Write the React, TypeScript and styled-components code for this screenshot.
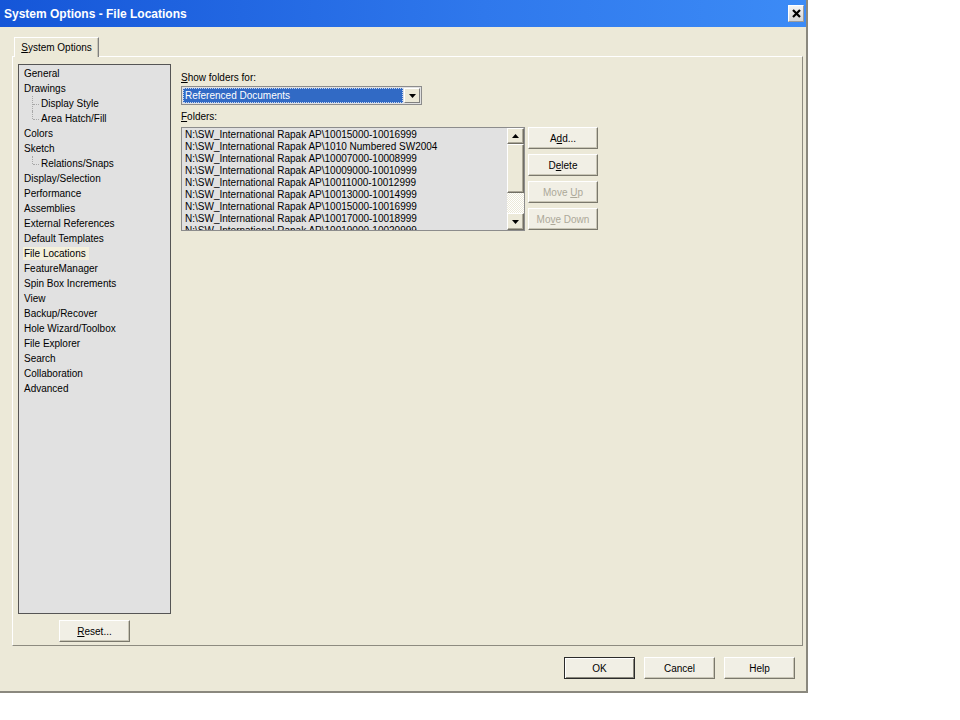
import React from 'react';
import styled, { createGlobalStyle } from 'styled-components';

const GlobalStyle = createGlobalStyle`
  html, body {
    margin: 0;
    padding: 0;
    background: #fff;
  }
  body {
    font-family: 'Liberation Sans', Arial, sans-serif;
    font-size: 10px;
    color: #000;
  }
`;

const Window = styled.div`
  width: 806px;
  height: 691px;
  background: #ece9d8;
  border-right: 2px solid #8a887e;
  border-bottom: 2px solid #8a887e;
  display: flex;
  flex-direction: column;
`;

const TitleBar = styled.div`
  height: 27px;
  flex: none;
  display: flex;
  align-items: center;
  justify-content: space-between;
  padding: 0 2px 0 4px;
  background: linear-gradient(to right, #1556d8, #2f78ec 60%, #3c8bf6);
`;

const Title = styled.div`
  color: #fff;
  font-weight: bold;
  font-size: 12px;
`;

const CloseButton = styled.div`
  width: 16px;
  height: 17px;
  box-sizing: border-box;
  display: flex;
  align-items: center;
  justify-content: center;
  background: linear-gradient(#f4f4f4, #d4d4d4);
  border: 1px solid #fff;
  border-right-color: #9a9a9a;
  border-bottom-color: #9a9a9a;
`;

const Body = styled.div`
  flex: 1;
  display: flex;
  flex-direction: column;
  padding: 10px 3px 0 12px;
`;

const TabStrip = styled.div`
  display: flex;
  padding-left: 2px;
`;

const Tab = styled.div`
  position: relative;
  z-index: 1;
  width: 85px;
  height: 20px;
  box-sizing: border-box;
  margin-bottom: -1px;
  display: flex;
  align-items: center;
  justify-content: center;
  background: #ece9d8;
  border-top: 1px solid #fff;
  border-left: 1px solid #fff;
  border-right: 1px solid #808080;
  box-shadow: inset -1px 0 #c8c5b5;
`;

const Panel = styled.div`
  width: 791px;
  height: 590px;
  box-sizing: border-box;
  border: 1px solid #fff;
  border-right-color: #8d8b80;
  border-bottom-color: #8d8b80;
  display: flex;
  gap: 10px;
  padding: 7px 5px 0 5px;
`;

const LeftCol = styled.div`
  width: 153px;
  display: flex;
  flex-direction: column;
  align-items: center;
  gap: 6px;
`;

const Tree = styled.div`
  width: 153px;
  height: 550px;
  box-sizing: border-box;
  border: 1px solid #555;
  background: #e1e1e1;
  padding: 1px 5px;
`;

const TreeItem = styled.div<{ $child?: boolean; $last?: boolean }>`
  position: relative;
  line-height: 15px;
  height: 15px;
  white-space: nowrap;
  padding-left: ${(p) => (p.$child ? '17px' : '0')};

  ${(p) =>
    p.$child &&
    `
    &::before {
      content: '';
      position: absolute;
      left: 8px;
      top: 0;
      height: ${p.$last ? '8px' : '15px'};
      border-left: 1px dotted #a8a8a8;
    }
    &::after {
      content: '';
      position: absolute;
      left: 9px;
      top: 8px;
      width: 6px;
      border-top: 1px dotted #a8a8a8;
    }
  `}
`;

const Selected = styled.span`
  background: #f4f0dc;
  margin-left: -1px;
  padding: 1px 3px 1px 1px;
`;

const Button = styled.div<{ $default?: boolean; $disabled?: boolean; $w?: number }>`
  width: ${(p) => p.$w ?? 70}px;
  height: 22px;
  box-sizing: border-box;
  display: flex;
  align-items: center;
  justify-content: center;
  background: #f1efe5;
  color: ${(p) => (p.$disabled ? '#aca899' : '#000')};
  border: 1px solid;
  border-color: ${(p) => (p.$default ? '#2b2b2b' : '#fff #7a786c #7a786c #fff')};
  box-shadow: ${(p) =>
    p.$default ? 'inset 1px 1px #fff, inset -1px -1px #8a887c' : 'inset -1px -1px #c9c6b6'};
  flex: none;
`;

const RightCol = styled.div`
  display: flex;
  flex-direction: column;
  padding-top: 7px;
`;

const Label = styled.div<{ $gap?: number }>`
  line-height: 13px;
  margin-top: ${(p) => p.$gap ?? 0}px;
`;

const Combo = styled.div`
  margin-top: 2px;
  width: 241px;
  height: 19px;
  box-sizing: border-box;
  border: 1px solid #8c8c8c;
  background: #e1e1e1;
  display: flex;
  align-items: stretch;
  padding: 1px;
  gap: 1px;
`;

const ComboValue = styled.div`
  flex: 1;
  background: #316ac5;
  color: #fff;
  border: 1px dotted #c8d6f0;
  display: flex;
  align-items: center;
  padding-left: 1px;
`;

const DropButton = styled.div`
  width: 16px;
  box-sizing: border-box;
  background: #ece9d8;
  border: 1px solid #fff;
  border-right-color: #808080;
  border-bottom-color: #808080;
  display: flex;
  align-items: center;
  justify-content: center;
`;

const FoldersRow = styled.div`
  margin-top: 4px;
  display: flex;
  gap: 3px;
  align-items: flex-start;
`;

const ListBox = styled.div`
  width: 344px;
  height: 104px;
  box-sizing: border-box;
  border: 1px solid #8c8c8c;
  background: #e1e1e1;
  display: flex;
`;

const Rows = styled.div`
  flex: 1;
  overflow: hidden;
  padding: 1px 0 0 3px;
`;

const Row = styled.div`
  line-height: 12px;
  white-space: nowrap;
`;

const ScrollBar = styled.div`
  width: 17px;
  display: flex;
  flex-direction: column;
`;

const ScrollButton = styled.div<{ $h: number }>`
  height: ${(p) => p.$h}px;
  box-sizing: border-box;
  background: #ece9d8;
  border: 1px solid #fff;
  border-right-color: #716f64;
  border-bottom-color: #716f64;
  box-shadow: inset -1px -1px #aca899;
  display: flex;
  align-items: center;
  justify-content: center;
`;

const Track = styled.div`
  flex: 1;
  background-color: #ece9d8;
  background-image: repeating-conic-gradient(#fff 0 25%, #ece9d8 0 50%);
  background-size: 2px 2px;
`;

const SideButtons = styled.div`
  display: flex;
  flex-direction: column;
  gap: 5px;
`;

const Footer = styled.div`
  display: flex;
  justify-content: flex-end;
  gap: 9px;
  padding: 11px 8px 0 0;
`;

const Key = styled.span`
  text-decoration: underline;
`;

const Arrow = ({ up }: { up?: boolean }) => (
  <svg width="7" height="4" viewBox="0 0 7 4">
    <path d={up ? 'M0 4 L3.5 0 L7 4 Z' : 'M0 0 L7 0 L3.5 4 Z'} fill="#000" />
  </svg>
);

const treeItems: { label: string; child?: boolean; last?: boolean; selected?: boolean }[] = [
  { label: 'General' },
  { label: 'Drawings' },
  { label: 'Display Style', child: true },
  { label: 'Area Hatch/Fill', child: true, last: true },
  { label: 'Colors' },
  { label: 'Sketch' },
  { label: 'Relations/Snaps', child: true, last: true },
  { label: 'Display/Selection' },
  { label: 'Performance' },
  { label: 'Assemblies' },
  { label: 'External References' },
  { label: 'Default Templates' },
  { label: 'File Locations', selected: true },
  { label: 'FeatureManager' },
  { label: 'Spin Box Increments' },
  { label: 'View' },
  { label: 'Backup/Recover' },
  { label: 'Hole Wizard/Toolbox' },
  { label: 'File Explorer' },
  { label: 'Search' },
  { label: 'Collaboration' },
  { label: 'Advanced' },
];

const prefix = 'N:\\SW_International Rapak AP\\';
const folders = [
  '10015000-10016999',
  '1010 Numbered SW2004',
  '10007000-10008999',
  '10009000-10010999',
  '10011000-10012999',
  '10013000-10014999',
  '10015000-10016999',
  '10017000-10018999',
  '10019000-10020999',
];

export default function App() {
  return (
    <>
      <GlobalStyle />
      <Window>
        <TitleBar>
          <Title>System Options - File Locations</Title>
          <CloseButton>
            <svg width="9" height="9" viewBox="0 0 9 9">
              <path d="M1 1 L8 8 M8 1 L1 8" stroke="#000" strokeWidth="2.2" />
            </svg>
          </CloseButton>
        </TitleBar>
        <Body>
          <TabStrip>
            <Tab>
              <span>
                <Key>S</Key>ystem Options
              </span>
            </Tab>
          </TabStrip>
          <Panel>
            <LeftCol>
              <Tree>
                {treeItems.map((t) => (
                  <TreeItem key={t.label} $child={t.child} $last={t.last}>
                    {t.selected ? <Selected>{t.label}</Selected> : t.label}
                  </TreeItem>
                ))}
              </Tree>
              <Button $w={71}>
                <span>
                  <Key>R</Key>eset...
                </span>
              </Button>
            </LeftCol>
            <RightCol>
              <Label>
                <Key>S</Key>how folders for:
              </Label>
              <Combo>
                <ComboValue>Referenced Documents</ComboValue>
                <DropButton>
                  <Arrow />
                </DropButton>
              </Combo>
              <Label $gap={5}>
                <Key>F</Key>olders:
              </Label>
              <FoldersRow>
                <ListBox>
                  <Rows>
                    {folders.map((f, i) => (
                      <Row key={i}>
                        {prefix}
                        {f}
                      </Row>
                    ))}
                  </Rows>
                  <ScrollBar>
                    <ScrollButton $h={16}>
                      <Arrow up />
                    </ScrollButton>
                    <ScrollButton $h={49} />
                    <Track />
                    <ScrollButton $h={17}>
                      <Arrow />
                    </ScrollButton>
                  </ScrollBar>
                </ListBox>
                <SideButtons>
                  <Button>
                    <span>
                      A<Key>d</Key>d...
                    </span>
                  </Button>
                  <Button>
                    <span>
                      D<Key>e</Key>lete
                    </span>
                  </Button>
                  <Button $disabled>
                    <span>
                      Move <Key>U</Key>p
                    </span>
                  </Button>
                  <Button $disabled>
                    <span>
                      Mo<Key>v</Key>e Down
                    </span>
                  </Button>
                </SideButtons>
              </FoldersRow>
            </RightCol>
          </Panel>
          <Footer>
            <Button $default $w={71}>OK</Button>
            <Button $w={71}>Cancel</Button>
            <Button $w={71}>Help</Button>
          </Footer>
        </Body>
      </Window>
    </>
  );
}
